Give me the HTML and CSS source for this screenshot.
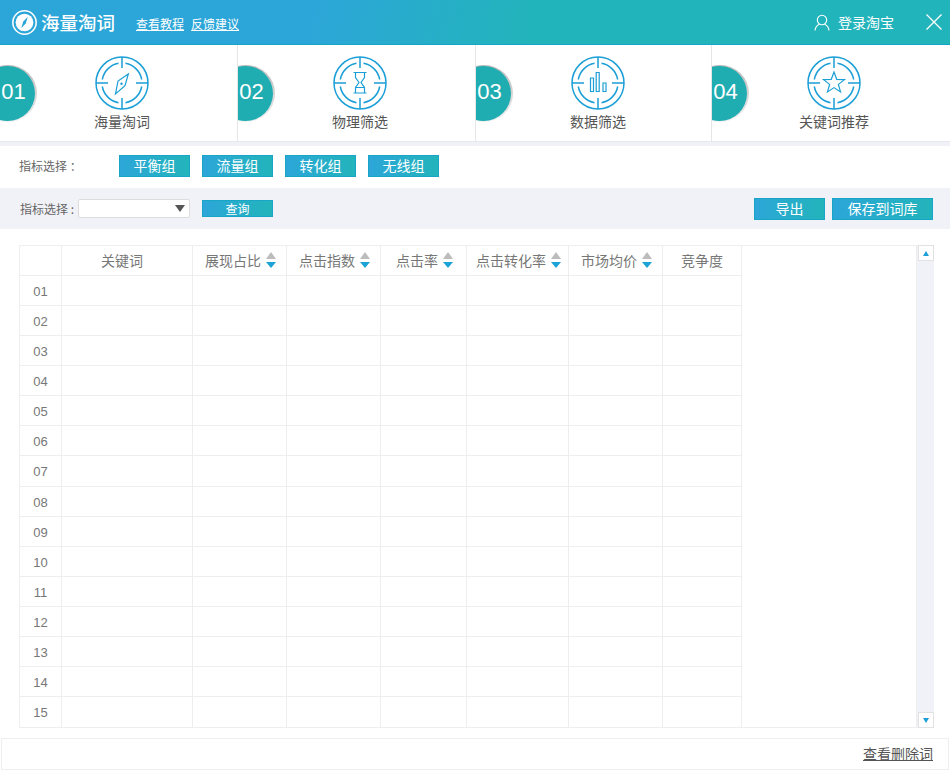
FILE: index.html
```html
<!DOCTYPE html>
<html lang="zh-CN">
<head>
<meta charset="utf-8">
<title>海量淘词</title>
<link rel="stylesheet" href="styles.css">
</head>
<body>
<svg class="defs" width="0" height="0" aria-hidden="true">
  <defs>
    <g id="ring">
      <circle r="26" class="line"/>
      <path class="line" d="M3.5-19.7A20 20 0 0 1 19.7-3.5M19.7 3.5A20 20 0 0 1 3.5 19.7M-3.5 19.7A20 20 0 0 1-19.7 3.5M-19.7-3.5A20 20 0 0 1-3.5-19.7"/>
      <path class="line" d="M0-26V-15M0 26V15M-26 0H-14M26 0H14"/>
    </g>
  </defs>
</svg>
<header class="topbar">
  <svg class="logo" viewBox="-12 -12 24 24" width="25" height="25">
    <circle r="11.2" class="logo-ring"/>
    <circle r="8.5" class="logo-disc"/>
    <path class="logo-needle" d="M3.2-5.5L1.2 1-3.2 5.5-1.2-1Z"/>
  </svg>
  <span class="brand">海量淘词</span>
  <nav class="toplinks"><a>查看教程</a><a>反馈建议</a></nav>
  <div class="topright">
    <svg class="user" viewBox="0 0 16 17" width="16" height="17">
      <circle cx="8" cy="6" r="4.7"/>
      <path d="M1 16.5C1.3 12.8 3.5 11 5.3 10.2M15 16.5C14.7 12.8 12.5 11 10.7 10.2"/>
    </svg>
    <span class="login">登录淘宝</span>
    <svg class="close" viewBox="0 0 16 16" width="16" height="16"><path d="M.5.5L15.5 15.5M15.5.5L.5 15.5"/></svg>
  </div>
</header>

<section class="tabs">
  <div class="tab">
    <div class="badge"><span class="badge-in">01</span></div>
    <div class="tab-main">
      <svg class="tab-icon" viewBox="-27 -27 54 54" width="54" height="54"><use href="#ring"/>
        <path class="line thin" d="M6.3-9L3 2.7-6.5 11-4-2Z"/><circle cx="-.5" cy=".7" r="1.2" class="dot"/></svg>
      <span class="tab-label">海量淘词</span>
    </div>
  </div>
  <div class="tab">
    <div class="badge"><span class="badge-in">02</span></div>
    <div class="tab-main">
      <svg class="tab-icon" viewBox="-27 -27 54 54" width="54" height="54"><use href="#ring"/>
        <path class="line thin" d="M-6.5-10.5H6.5M-6.5 10H6.5M-4.5-10.5V-5.5L-1-.5-4.5 4.5V10M4.5-10.5V-5.5L1-.5 4.5 4.5V10M-4.5 4.5H4.5"/></svg>
      <span class="tab-label">物理筛选</span>
    </div>
  </div>
  <div class="tab tab-narrow">
    <div class="badge"><span class="badge-in">03</span></div>
    <div class="tab-main">
      <svg class="tab-icon" viewBox="-27 -27 54 54" width="54" height="54"><use href="#ring"/>
        <path class="line thin" d="M-7.5-5H-4.5V8.5H-7.5ZM-1.8-10.5H1.2V8.5H-1.8ZM5 0H8V8.5H5Z"/></svg>
      <span class="tab-label">数据筛选</span>
    </div>
  </div>
  <div class="tab">
    <div class="badge"><span class="badge-in">04</span></div>
    <div class="tab-main">
      <svg class="tab-icon" viewBox="-27 -27 54 54" width="54" height="54"><use href="#ring"/>
        <path class="line thin" d="M0-11L2.7-3.7 10.5-3.4 4.4 1.4 6.5 8.9 0 4.6-6.5 8.9-4.4 1.4-10.5-3.4-2.7-3.7Z"/></svg>
      <span class="tab-label">关键词推荐</span>
    </div>
  </div>
</section>

<section class="groups">
  <span class="field-label group-label">指标选择 ：</span>
  <div class="group-btns">
    <button class="btn">平衡组</button>
    <button class="btn">流量组</button>
    <button class="btn">转化组</button>
    <button class="btn">无线组</button>
  </div>
</section>

<section class="query">
  <span class="field-label">指标选择 :</span>
  <div class="select"><i class="select-arrow"></i></div>
  <button class="btn btn-small">查询</button>
  <div class="query-actions">
    <button class="btn">导出</button>
    <button class="btn btn-wide">保存到词库</button>
  </div>
</section>

<section class="content">
  <div class="panel">
    <table class="grid">
      <colgroup>
        <col class="c1"><col class="c2"><col class="c3"><col class="c3"><col class="c4"><col class="c5"><col class="c3"><col class="c6">
      </colgroup>
      <thead>
        <tr>
          <th></th>
          <th class="th-key">关键词</th>
          <th><span class="th-in">展现占比<i class="sort"><b class="up"></b><b class="down"></b></i></span></th>
          <th><span class="th-in">点击指数<i class="sort"><b class="up"></b><b class="down"></b></i></span></th>
          <th><span class="th-in">点击率<i class="sort"><b class="up"></b><b class="down"></b></i></span></th>
          <th><span class="th-in">点击转化率<i class="sort"><b class="up"></b><b class="down"></b></i></span></th>
          <th><span class="th-in">市场均价<i class="sort"><b class="up"></b><b class="down"></b></i></span></th>
          <th>竞争度</th>
        </tr>
      </thead>
      <tbody>
        <tr><td>01</td><td></td><td></td><td></td><td></td><td></td><td></td><td></td></tr>
        <tr><td>02</td><td></td><td></td><td></td><td></td><td></td><td></td><td></td></tr>
        <tr><td>03</td><td></td><td></td><td></td><td></td><td></td><td></td><td></td></tr>
        <tr><td>04</td><td></td><td></td><td></td><td></td><td></td><td></td><td></td></tr>
        <tr><td>05</td><td></td><td></td><td></td><td></td><td></td><td></td><td></td></tr>
        <tr><td>06</td><td></td><td></td><td></td><td></td><td></td><td></td><td></td></tr>
        <tr class="tall"><td>07</td><td></td><td></td><td></td><td></td><td></td><td></td><td></td></tr>
        <tr><td>08</td><td></td><td></td><td></td><td></td><td></td><td></td><td></td></tr>
        <tr><td>09</td><td></td><td></td><td></td><td></td><td></td><td></td><td></td></tr>
        <tr><td>10</td><td></td><td></td><td></td><td></td><td></td><td></td><td></td></tr>
        <tr><td>11</td><td></td><td></td><td></td><td></td><td></td><td></td><td></td></tr>
        <tr><td>12</td><td></td><td></td><td></td><td></td><td></td><td></td><td></td></tr>
        <tr><td>13</td><td></td><td></td><td></td><td></td><td></td><td></td><td></td></tr>
        <tr><td>14</td><td></td><td></td><td></td><td></td><td></td><td></td><td></td></tr>
        <tr class="last"><td>15</td><td></td><td></td><td></td><td></td><td></td><td></td><td></td></tr>
      </tbody>
    </table>
  </div>
  <div class="scroll">
    <div class="scroll-btn"><i class="tri-up"></i></div>
    <div class="scroll-btn"><i class="tri-down"></i></div>
  </div>
</section>

<footer class="foot"><a class="foot-link">查看删除词</a></footer>
</body>
</html>
```

FILE: styles.css
```css
* { box-sizing: border-box; }
html, body { margin: 0; padding: 0; }
body {
  width: 950px;
  height: 770px;
  overflow: hidden;
  background: #f1f2f7;
  font-family: "Noto Sans CJK SC", "Liberation Sans", sans-serif;
  color: #666;
}
.defs { display: block; width: 0; height: 0; }
.line { fill: none; stroke: #1b9fd6; stroke-width: 1.5; }
.thin { stroke-width: 1.2; }
.dot { fill: #1b9fd6; }

.topbar {
  height: 45px;
  display: flex;
  align-items: center;
  padding-left: 12px;
  color: #fff;
  background: linear-gradient(100deg, #2ca6d8 33%, #22b4bb 56%);
  border-bottom: 1px solid #14a5c4;
}
.logo { display: block; margin-right: 4px; }
.logo-ring { fill: none; stroke: #fff; stroke-width: 1.5; }
.logo-disc { fill: #fff; }
.logo-needle { fill: #2ca6d8; }
.brand { font-size: 18.5px; font-weight: 500; line-height: 24px; margin-right: 21px; }
.toplinks { display: flex; gap: 7px; font-size: 12px; padding-top: 3px; }
.toplinks a { text-decoration: underline; }
.topright { margin-left: auto; display: flex; align-items: center; }
.user { fill: none; stroke: #fff; stroke-width: 1.1; margin-right: 8px; }
.login { font-size: 14px; margin-right: 32px; }
.close { fill: none; stroke: #fff; stroke-width: 1.3; margin-right: 8px; }

.tabs {
  display: grid;
  grid-template-columns: 238px 238px 236px 238px;
  height: 97px;
  background: #fff;
  border-bottom: 1px solid #e6e6ee;
}
.tab {
  position: relative;
  overflow: hidden;
  border-right: 1px solid #e6e6e6;
}
.tab:last-child { border-right: 0; }
.badge {
  position: absolute;
  left: -21px;
  top: 20px;
  width: 58px;
  height: 57px;
  border-radius: 50%;
  padding: 1px 2px 1px 1px;
  background: linear-gradient(#b9b9b9, #f0f0f0);
}
.badge-in {
  display: flex;
  align-items: center;
  justify-content: center;
  width: 55px;
  height: 55px;
  padding: 0 0 3px 12px;
  border-radius: 50%;
  background: #1fadb2;
  color: #fff;
  font: 22px/1 "Liberation Sans", sans-serif;
}
.tab-main {
  width: 100px;
  margin-left: 72px;
  padding-top: 11px;
  display: flex;
  flex-direction: column;
  align-items: center;
}
.tab-icon { display: block; }
.tab-label {
  font-size: 14px;
  line-height: 20px;
  margin-top: 1px;
  color: #555;
  white-space: nowrap;
}

.groups {
  margin-top: 4px;
  height: 42px;
  display: flex;
  align-items: flex-start;
  padding: 9px 0 0 19px;
  background: #fff;
}
.field-label { font-size: 12px; line-height: 20px; color: #666; white-space: nowrap; }
.group-label { width: 100px; padding-top: 1px; }
.group-btns { display: flex; gap: 12px; }
.btn {
  width: 71px;
  height: 22px;
  padding: 0 0 2px;
  border: 1px solid #18a5c6;
  background: linear-gradient(90deg, #2ca6d8, #22b4bb);
  color: #fff;
  font: 14px/18px "Noto Sans CJK SC", sans-serif;
}
.btn-small { height: 17px; padding: 0; font-size: 12px; line-height: 15px; margin-left: 12px; }
.btn-wide { width: 101px; }

.query {
  height: 41px;
  display: flex;
  align-items: center;
  padding: 0 17px 0 20px;
  background: #f1f2f7;
}
.select {
  position: relative;
  width: 112px;
  height: 19px;
  margin-left: 4px;
  background: #fff;
  border: 1px solid #dcdcdc;
  border-radius: 2px;
}
.select-arrow {
  position: absolute;
  right: 4px;
  top: 5px;
  border-style: solid;
  border-width: 7px 5px 0;
  border-color: #555 transparent transparent;
}
.query-actions { margin-left: auto; display: flex; gap: 7px; }

.content {
  display: flex;
  align-items: flex-start;
  padding: 16px 0 10px 19px;
  background: #fff;
}
.panel {
  width: 898px;
  height: 483px;
  border: 1px solid #eee;
}
.grid {
  table-layout: fixed;
  width: 722px;
  border-collapse: separate;
  border-spacing: 0;
}
.c1 { width: 42px; }
.c2 { width: 131px; }
.c3 { width: 94px; }
.c4 { width: 86px; }
.c5 { width: 102px; }
.c6 { width: 79px; }
.grid th, .grid td {
  height: 30px;
  border-right: 1px solid #eee;
  border-bottom: 1px solid #eee;
  text-align: center;
  color: #777;
  font-weight: 400;
}
.grid th { padding: 0 0 2px; font-size: 14px; line-height: 20px; }
.grid .th-key { padding-right: 10px; }
.grid td { padding: 2px 0 0; font: 13px/20px "Liberation Sans", sans-serif; }
.grid .tall td { height: 31px; }
.grid .last td { border-bottom: 0; }
.th-in { display: inline-flex; align-items: center; gap: 5px; padding-left: 2px; }
.sort { display: flex; flex-direction: column; gap: 3px; }
.up, .down { display: block; border-style: solid; }
.up { border-width: 0 5px 7px; border-color: transparent transparent #bcbcbc; }
.down { border-width: 6px 5px 0; border-color: #1ba3d6 transparent transparent; }

.scroll {
  width: 17px;
  height: 483px;
  background: #f1f2f7;
  padding-left: 1px;
  display: flex;
  flex-direction: column;
  justify-content: space-between;
}
.scroll-btn {
  width: 16px;
  height: 16px;
  background: #fff;
  border: 1px solid #e2e2e2;
  display: flex;
  align-items: center;
  justify-content: center;
}
.tri-up { border-style: solid; border-width: 0 3.5px 5px; border-color: transparent transparent #1b9fd6; }
.tri-down { border-style: solid; border-width: 5px 3.5px 0; border-color: #1b9fd6 transparent transparent; }

.foot {
  width: 948px;
  height: 32px;
  margin-left: 1px;
  border: 1px solid #eee;
  display: flex;
  align-items: center;
  justify-content: flex-end;
  padding: 0 15px 2px 0;
  background: #fff;
  box-shadow: -1px 0 0 #fff, 1px 0 0 #fff;
}
.foot-link { font-size: 14px; color: #555; text-decoration: underline; }
```
